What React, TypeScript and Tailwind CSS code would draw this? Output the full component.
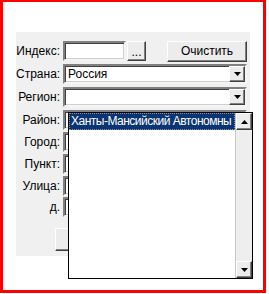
import React from "react";

const sunken =
  "border-2 border-t-[#808080] border-l-[#808080] border-b-[#f4f4f4] border-r-[#f4f4f4] shadow-[inset_1px_1px_0_#404040,inset_-1px_-1px_0_#d4d0c8] bg-white";
const raised =
  "border border-t-white border-l-white border-b-[#404040] border-r-[#404040] shadow-[inset_-1px_-1px_0_#808080] bg-[#ececec]";

function Arrow({ up }: { up?: boolean }) {
  return (
    <svg width="7" height="4" viewBox="0 0 7 4">
      <path d={up ? "M0 4 L3.5 0 L7 4 Z" : "M0 0 L7 0 L3.5 4 Z"} fill="#000" />
    </svg>
  );
}

function Combo({ value }: { value?: string }) {
  return (
    <div className={`${sunken} h-[20px] flex items-center`}>
      <div className="flex-1 pl-[3px] leading-none">{value}</div>
      <div className={`${raised} w-[16px] h-[16px] flex items-center justify-center`}>
        <Arrow />
      </div>
    </div>
  );
}

function Row(props: { label: string; className?: string; children?: React.ReactNode }) {
  const { label, className, children } = props;
  return (
    <div className={`flex items-center h-[20px] ${className ?? ""}`}>
      <div className="w-[45px] text-right pr-[1px] shrink-0">{label}</div>
      <div className="flex-1 ml-[2px]">{children}</div>
    </div>
  );
}

export default function App() {
  return (
    <div className="w-[269px] h-[294px] bg-white font-['Liberation_Sans',Arial,sans-serif] text-[12px] text-black">
      <div className="w-[266px] h-[293px] border-[#ff0000] border-l-[3px] border-t-2 border-r-[3px] border-b-[3px] relative">
        <div className="ml-[13px] mt-[30px] w-[234px] h-[224px] bg-[#f0f0f0] pt-[9px] pr-[3px] flex flex-col">
          <Row label="Индекс:">
            <div className="flex items-center">
              <div className={`${sunken} w-[63px] h-[20px]`} />
              <div className={`${raised} w-[19px] h-[20px] ml-[1px] flex items-end justify-center pb-[2px] leading-none`}>...</div>
              <div className={`${raised} w-[80px] h-[21px] ml-auto flex items-center justify-center`}>Очистить</div>
            </div>
          </Row>
          <Row label="Страна:" className="mt-[3px]">
            <Combo value="Россия" />
          </Row>
          <Row label="Регион:" className="mt-[3px]">
            <Combo />
          </Row>
          <Row label="Район:" className="mt-[3px]">
            <Combo />
          </Row>
          <Row label="Город:" className="mt-[2px]">
            <div className={`${sunken} h-[20px]`} />
          </Row>
          <Row label="Пункт:" className="mt-[2px]">
            <div className={`${sunken} h-[20px]`} />
          </Row>
          <Row label="Улица:" className="mt-[2px]">
            <div className={`${sunken} h-[20px]`} />
          </Row>
          <Row label="д." className="mt-[1px]">
            <div className={`${sunken} h-[20px]`} />
          </Row>
          <div className="mt-[11px] ml-[39px]">
            <div className={`${raised} w-[90px] h-[23px]`} />
          </div>
        </div>

        {/* dropdown list of Район */}
        <div className="absolute left-[65px] top-[110px] w-[185px] h-[167px] border border-black bg-white flex">
          <div className="flex-1 min-w-0">
            <div className="h-[17px] bg-[#0b3572] text-white whitespace-nowrap overflow-hidden pl-[2px] leading-[17px] tracking-[-0.5px] outline-1 outline-dotted outline-[#8090b0] -outline-offset-1">
              Ханты-Мансийский Автономны
            </div>
          </div>
          <div className="w-[17px] bg-[#eeeeee] border-l border-[#c8c8c8] flex flex-col justify-between">
            <div className={`${raised} h-[17px] flex items-center justify-center`}>
              <Arrow up />
            </div>
            <div className={`${raised} h-[17px] flex items-center justify-center`}>
              <Arrow />
            </div>
          </div>
        </div>
      </div>
    </div>
  );
}
